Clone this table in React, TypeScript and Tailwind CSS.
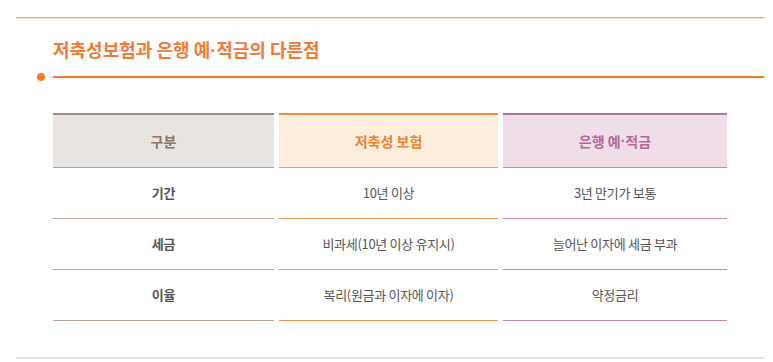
const Dot = () => (
  <span style={{ fontFamily: '"Liberation Sans", sans-serif' }}>·</span>
);

const COLUMNS = [
  {
    title: <>구분</>,
    key: "a",
    width: "w-[221px]",
    head: "bg-[#e8e4e1] border-t-[#a38d80] border-b-[#b4a194] text-[#8c7566]",
    line: "border-b-[#b8a397]",
    cell: "font-semibold text-[#555]",
    rows: ["기간", "세금", "이율"],
  },
  {
    title: <>저축성 보험</>,
    key: "b",
    width: "w-[219px]",
    head: "bg-[#feefdc] border-t-[#f39046] border-b-[#f39a58] text-[#f28035]",
    line: "border-b-[#f3934e]",
    cell: "text-[#555]",
    rows: ["10년 이상", "비과세(10년 이상 유지시)", "복리(원금과 이자에 이자)"],
  },
  {
    title: (
      <>
        은행 예<Dot />
        적금
      </>
    ),
    key: "c",
    width: "w-[224px]",
    head: "bg-[#efdee8] border-t-[#b8729f] border-b-[#c68bb1] text-[#b2689a]",
    line: "border-b-[#c585b0]",
    cell: "text-[#555]",
    rows: ["3년 만기가 보통", "늘어난 이자에 세금 부과", "약정금리"],
  },
];

export default function App() {
  return (
    <div
      className="h-[362px] w-[773px] bg-white pl-[16px] pt-[17px]"
      style={{ fontFamily: '"Noto Sans CJK KR", "Noto Sans", sans-serif' }}
    >
      <div className="w-[748px]">
        <div className="h-px bg-[#f6a37b]" />
        <div className="h-px bg-[#fde0d0]" />

        <h2 className="mt-[20px] pl-[37px] text-[18px] font-semibold leading-[20px] text-[#f27a34]">
          저축성보험과 은행 예<Dot />
          적금의 다른점
        </h2>

        <div className="mt-[12px] flex items-center">
          <span className="ml-[21px] h-[8px] w-[8px] rounded-full bg-[#f47a2a]" />
          <span className="ml-[8px] h-[2px] flex-1 bg-[#f47a2a]" />
        </div>

        <div className="mt-[32px] flex gap-[5px] pl-[37px]">
          {COLUMNS.map((col) => (
            <div key={col.key} className={`flex flex-col ${col.width}`}>
              <div
                className={`flex h-[55px] items-center justify-center border-t-2 border-b text-[14px] font-semibold ${col.head}`}
              >
                {col.title}
              </div>
              {col.rows.map((r) => (
                <div
                  key={r}
                  className={`flex h-[51px] items-center justify-center border-b text-[13px] tracking-[-0.3px] ${col.line} ${col.cell}`}
                >
                  {r}
                </div>
              ))}
            </div>
          ))}
        </div>

        <div className="mt-[36px] h-[2px] bg-[#e3e3e3]" />
      </div>
    </div>
  );
}
